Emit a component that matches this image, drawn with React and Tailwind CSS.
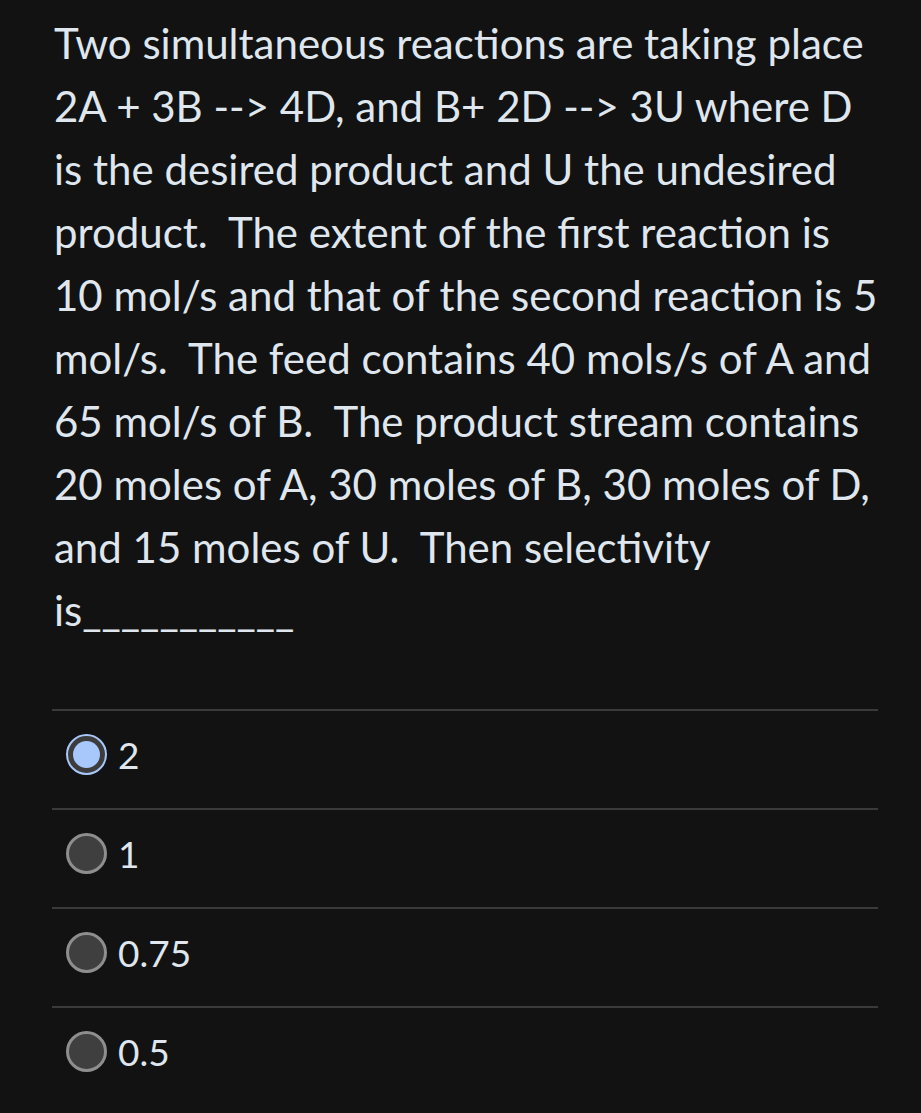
import React from 'react';

const options = [
    { label: '2', selected: true },
    { label: '1', selected: false },
    { label: '0.75', selected: false },
    { label: '0.5', selected: false },
];

const Radio = ({ selected }) => {
    if (selected) {
        return (
            <span className="w-[41px] h-[41px] rounded-full border-2 border-[#a8c7fa] bg-[#3c3c3c] flex items-center justify-center">
                <span className="w-[27px] h-[27px] rounded-full bg-[#a8c7fa]" />
            </span>
        );
    }
    return <span className="w-[41px] h-[41px] rounded-full border-[3px] border-[#8e8e8e] bg-[#3f3f3f]" />;
};

export default function App() {
    return (
        <div className="min-h-[1113px] w-[921px] bg-[#121212] text-[#dfe6ee] font-['Lato','Noto_Sans',sans-serif]">
            <div className="pl-[54px] pt-[12px] w-[879px]">
                <p className="text-[42px] leading-[63px]">
                    Two simultaneous reactions are taking place 2A + 3B --&gt; 4D, and B+ 2D --&gt; 3U where D is the desired product and U the undesired product.&nbsp; The extent of the first reaction is 10 mol/s and that of the second reaction is 5 mol/s.&nbsp; The feed contains 40 mols/s of A and 65 mol/s of B.&nbsp; The product stream contains 20 moles of A, 30 moles of B, 30 moles of D, and 15 moles of U.&nbsp; Then selectivity is___________
                </p>
            </div>

            {/* Options */}
            <div className="ml-[52px] mr-[43px] mt-[67px]">
                {options.map((opt) => (
                    <div key={opt.label} className="border-t-2 border-[#3a3a3a] h-[99px] pb-[10px] flex items-center gap-[11px] pl-[14px]">
                        <Radio selected={opt.selected} />
                        <span className="text-[37px] leading-none text-[#dfe6ee]">{opt.label}</span>
                    </div>
                ))}
            </div>
        </div>
    );
}
